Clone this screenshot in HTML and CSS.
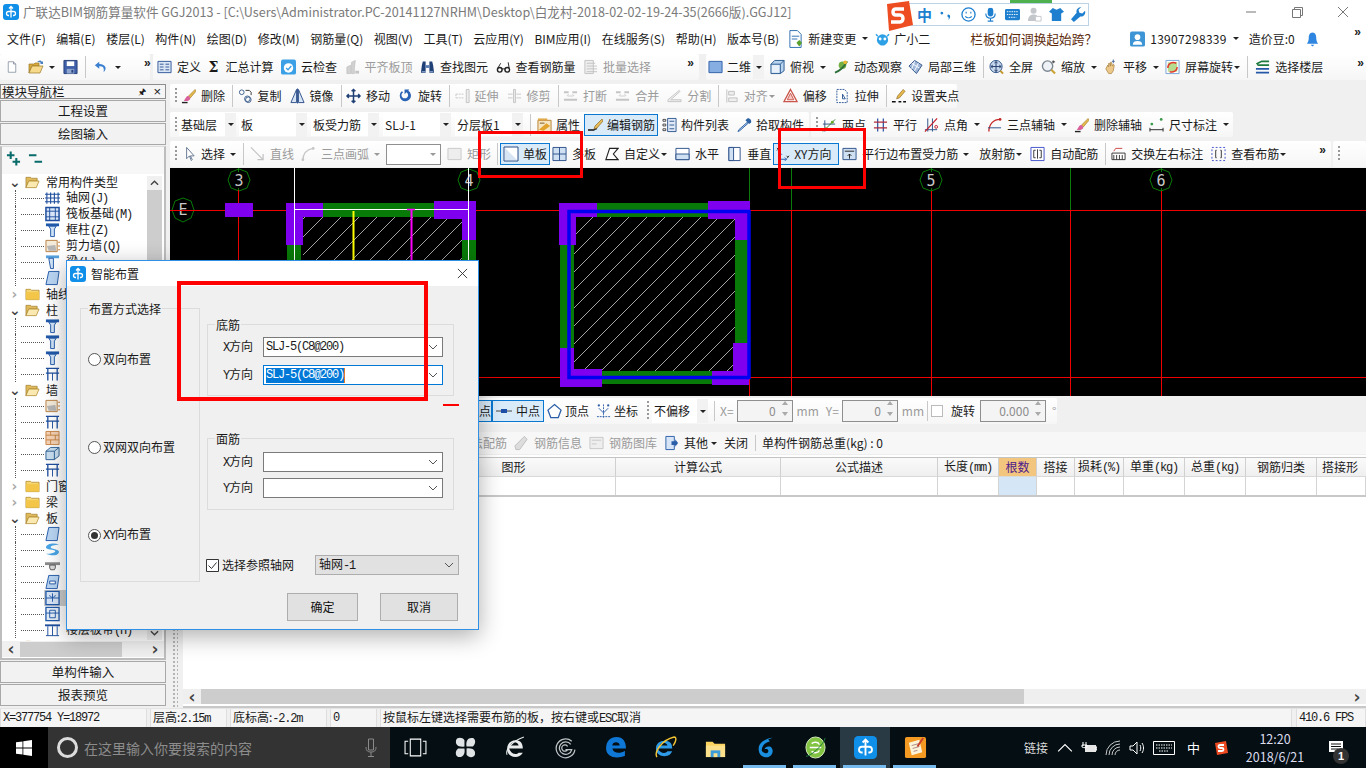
FILE: index.html
```html
<!DOCTYPE html>
<html lang="zh-CN">
<head>
<meta charset="utf-8">
<title>广联达BIM钢筋算量软件 GGJ2013</title>
<link rel="stylesheet" href="styles.css">
</head>
<body>
<svg class="sprite" xmlns="http://www.w3.org/2000/svg">
<symbol id="new" viewBox="0 0 16 16"><path d="M3 1h7l3 3v11H3z" fill="#fff" stroke="#7b8794"/><path d="M10 1v3h3" fill="#dde" stroke="#7b8794"/></symbol>
<symbol id="open" viewBox="0 0 16 16"><path d="M1 14V5h5l1-1h4v3H4L1 14z" fill="#d9a93c" stroke="#9a7a2a" stroke-width=".7"/><path d="M1 14l3-7h11l-3 7z" fill="#f6d98a" stroke="#9a7a2a" stroke-width=".7"/><path d="M9 3c2-2 4-2 5 0l1-1v3h-3l1-1c-1-1-2-1-4-1z" fill="#4a7fc1"/></symbol>
<symbol id="save" viewBox="0 0 16 16"><path d="M1 1h14v14H1z" fill="#3f5fa8" stroke="#26407a"/><path d="M4 2h8v5H4z" fill="#fff"/><path d="M4 10h8v5H4z" fill="#8fa6cf"/><path d="M9 11h2v3H9z" fill="#26407a"/></symbol>
<symbol id="undo" viewBox="0 0 16 16"><path d="M6 2L1 6l5 4V7c4 0 6 1 5 7 4-4 3-9-5-9.500z" fill="#3b7fd0"/></symbol>
<symbol id="def" viewBox="0 0 16 16"><path d="M1 2h14v12H1z" fill="#dbe6f5" stroke="#2f5597"/><path d="M3 5h4M3 8h4M3 11h4M9 5h4M9 8h4M9 11h4" stroke="#2f5597"/></symbol>
<symbol id="cloud" viewBox="0 0 16 16"><rect x="0" y="0" width="16" height="16" rx="2" fill="#3ba0e6"/><circle cx="8" cy="9" r="5" fill="#fff"/><path d="M5.500 9l2 2 3.500-4" fill="none" stroke="#3ba0e6" stroke-width="1.500"/></symbol>
<symbol id="level" viewBox="0 0 16 16"><path d="M2 15V8l4-2v9zM7 15V3l4-2-1 8v6z" fill="#d2d2d2" stroke="#b5b5b5" stroke-width=".6"/><path d="M11 12h4v3h-4z" fill="#c4c4c4"/></symbol>
<symbol id="bino" viewBox="0 0 16 16"><path d="M1 14l1-8 1-4h3v12zM10 2h3l1 4 1 8H10z" fill="#1f3f77"/><path d="M6 6h4v3H6z" fill="#5b7cb3"/><path d="M2 13h4M10 13h4" stroke="#9db4d9"/></symbol>
<symbol id="glass" viewBox="0 0 16 16"><circle cx="4" cy="11" r="2.500" fill="none" stroke="#222" stroke-width="1.500"/><circle cx="12" cy="11" r="2.500" fill="none" stroke="#222" stroke-width="1.500"/><path d="M6 10h4M2 9l3-5M14 9l-1-6" fill="none" stroke="#222"/></symbol>
<symbol id="batch" viewBox="0 0 16 16"><path d="M2 1h9v14H2z" fill="#eee" stroke="#c2c2c2"/><path d="M4 4h9M4 7h11M4 10h11M4 13h11" stroke="#c2c2c2"/></symbol>
<symbol id="plan" viewBox="0 0 16 16"><path d="M1 2h14v12H1z" fill="#86aee3" stroke="#2f5fa8"/></symbol>
<symbol id="top" viewBox="0 0 16 16"><path d="M1 5l4-4h10v11l-4 3H1z" fill="#b9d4ee" stroke="#26578f"/><path d="M1 5h10v10M11 5l4-4" fill="none" stroke="#26578f"/><path d="M2 6h8v8H2z" fill="#e8f1fa"/></symbol>
<symbol id="orbit" viewBox="0 0 16 16"><circle cx="9" cy="6" r="4" fill="#72b043"/><path d="M1 14c4-1 10-6 13-12" fill="none" stroke="#2f6f3b" stroke-width="2"/><circle cx="12" cy="3" r="2" fill="#e7b92f"/></symbol>
<symbol id="local" viewBox="0 0 16 16"><path d="M1 7l6-6 8 5-6 9z" fill="#9fb8da" stroke="#33558a"/><path d="M4 4l8 5M7 2l-3 8M11 4l-4 8" stroke="#fff"/></symbol>
<symbol id="full" viewBox="0 0 16 16"><circle cx="7.500" cy="7.500" r="6.500" fill="#c8d9ef" stroke="#2c4f86"/><path d="M7.500 2.500v10M2.500 7.500h10M6 4l1.500-2L9 4M6 11l1.500 2L9 11M4 6L2 7.500 4 9M11 6l2 1.500L11 9" fill="none" stroke="#203a66"/><path d="M12 12l3 3" stroke="#c09a2c" stroke-width="2"/></symbol>
<symbol id="zoomi" viewBox="0 0 16 16"><circle cx="7" cy="7" r="5.500" fill="#eef2f6" stroke="#7c8792" stroke-width="1.500"/><path d="M11 11l4 4" stroke="#caa335" stroke-width="2.200"/><path d="M13 1v3M12 2.500h3" stroke="#333"/></symbol>
<symbol id="hand" viewBox="0 0 16 16"><path d="M3 10l2-4 1 2V4l1 0 1 3V3l1 0 1 4 1-2 1 1-1 6-2 3H6z" fill="#ecc88a" stroke="#a47a36" stroke-width=".7"/><path d="M11 0v4M9.500 2h3" stroke="#4c6f9f"/></symbol>
<symbol id="rot" viewBox="0 0 16 16"><path d="M1 1h14v14H1z" fill="#fff" stroke="#76a3d6"/><path d="M3 3h10v10H3z" fill="#b7dc8f"/><path d="M3 9c0-5 5-7 9-5" fill="none" stroke="#e23a2a" stroke-width="1.600"/><path d="M13 8c0 4-4 6-8 5" fill="none" stroke="#e23a2a" stroke-width="1.600"/></symbol>
<symbol id="floor" viewBox="0 0 16 16"><path d="M1 4l6-3h8v2H7L3 5h12v2H3z" fill="#1f7a3d"/><path d="M1 9h14v2H1zM1 13h14v2H1z" fill="#2458a6"/></symbol>
<symbol id="brush" viewBox="0 0 16 16"><path d="M15 1L8 8l2 2 6-7z" fill="#e4b84c" stroke="#9a7628" stroke-width=".6"/><path d="M8 8c-3 0-3 3-5 5 3 1 7 0 7-3z" fill="#d9609a"/><path d="M1 15h6" stroke="#222" stroke-width="1.500"/></symbol>
<symbol id="copy" viewBox="0 0 16 16"><circle cx="4" cy="4" r="2.500" fill="none" stroke="#3d5f8e"/><circle cx="10" cy="11" r="3" fill="none" stroke="#3d5f8e"/><circle cx="11" cy="12" r="3" fill="none" stroke="#3d5f8e"/><path d="M8 2h4l2 2v3" fill="none" stroke="#333"/></symbol>
<symbol id="mirror" viewBox="0 0 16 16"><path d="M7 1L1 15h6zM9 1l6 14H9z" fill="#d7e5f6" stroke="#2d4f8a"/><path d="M8 0v16" stroke="#2d4f8a"/></symbol>
<symbol id="move" viewBox="0 0 16 16"><path d="M8 1v14M1 8h14M6 3l2-2 2 2M6 13l2 2 2-2M3 6L1 8l2 2M13 6l2 2-2 2" fill="none" stroke="#1e3f74" stroke-width="1.600"/></symbol>
<symbol id="rotate" viewBox="0 0 16 16"><path d="M4 3a6 6 0 1 0 7-.500L12 1 7 1v5l2-2a3.500 3.500 0 1 1-3.500 0z" fill="#2a63b5"/></symbol>
<symbol id="extend" viewBox="0 0 16 16"><path d="M1 6h9M1 10h9M1 6v4" fill="none" stroke="#c8c8c8" stroke-dasharray="2 1"/><path d="M12 1h3v14h-3z" fill="#eee" stroke="#c3c3c3"/></symbol>
<symbol id="trim" viewBox="0 0 16 16"><path d="M1 6h5M10 6h5M1 10h5M10 10h5" stroke="#c8c8c8"/><path d="M7 1h2v14H7z" fill="#eee" stroke="#c3c3c3"/></symbol>
<symbol id="break" viewBox="0 0 16 16"><path d="M1 4h5M10 4h5M1 12h14" stroke="#c5c5c5" stroke-width="2"/><path d="M5 8h6M4 8l2-2M12 8l-2-2" fill="none" stroke="#ccc"/></symbol>
<symbol id="split" viewBox="0 0 16 16"><path d="M1 14h14v-2H4L14 3l-1-1L1 12z" fill="#eee" stroke="#c5c5c5"/></symbol>
<symbol id="align" viewBox="0 0 16 16"><path d="M3 1v14M5 3h6v4H5zM5 10h9v4H5z" fill="#eee" stroke="#c0c0c0"/></symbol>
<symbol id="offset" viewBox="0 0 16 16"><path d="M8 1l7 13H1z" fill="#fff" stroke="#c9554b" stroke-width="1.400"/><path d="M8 5l3.500 7h-7z" fill="#f4c6c0" stroke="#c9554b"/></symbol>
<symbol id="stretch" viewBox="0 0 16 16"><path d="M2 1h8l3 3v11H2z" fill="#fff" stroke="#2e5896" stroke-dasharray="2 1"/><path d="M8 6l3 5H8z" fill="none" stroke="#2e5896"/></symbol>
<symbol id="gripi" viewBox="0 0 16 16"><path d="M1 14h4M8 14h3M13 14h3" stroke="#111" stroke-width="1.600"/><path d="M13 1L7 8l-1 3 3-1 6-7z" fill="#e7b84a" stroke="#8a6a26" stroke-width=".7"/></symbol>
<symbol id="attr" viewBox="0 0 16 16"><path d="M1 3h14v12H1z" fill="#f7e6c4" stroke="#b57f2d"/><path d="M1 1h10v2H1z" fill="#e0a94a"/><path d="M2 13l8-7 4 3-7 5z" fill="#e2a32d"/><path d="M3 6h5" stroke="#7c5520"/></symbol>
<symbol id="edit" viewBox="0 0 16 16"><path d="M1 13h6c1 0 1-2 3-1" fill="none" stroke="#111" stroke-width="1.300"/><path d="M15 2L8 9l-1 3 3-1 6-7z" fill="#e6bd5a" stroke="#8d6a28" stroke-width=".7"/></symbol>
<symbol id="list" viewBox="0 0 16 16"><path d="M6 1h9v14H6z" fill="#dfe9f7" stroke="#30588f"/><path d="M8 4h5M8 8h5M8 12h5" stroke="#30588f"/><path d="M1 2h3v2H1zM1 7h3v2H1zM1 12h3v2H1z" fill="none" stroke="#222" stroke-width=".8"/></symbol>
<symbol id="drop" viewBox="0 0 16 16"><path d="M11 5L2 13l-1 2 2-1 9-8z" fill="#b7d3ef" stroke="#2d62a3"/><path d="M9 3l4 4 1-1 1-1c1-2-2-5-4-4z" fill="#2d62a3"/></symbol>
<symbol id="two" viewBox="0 0 16 16"><path d="M1 13h13M3 15V3M1 7h13" stroke="#2f4f7f"/><path d="M1 15L14 2" stroke="#2e7d32"/><circle cx="4" cy="12" r="1.500" fill="#9a3"/><circle cx="11" cy="5" r="1.500" fill="#6a2"/></symbol>
<symbol id="par" viewBox="0 0 16 16"><path d="M5 1v14M11 1v14" stroke="#2b4fa0" stroke-width="1.300"/><path d="M1 5h14M1 11h14" stroke="#b02a3a" stroke-width="1.300"/></symbol>
<symbol id="ang" viewBox="0 0 16 16"><path d="M1 13h13M4 1v14M9 1v14" stroke="#2b4f8a"/><path d="M1 15L14 1" stroke="#c21f2a" stroke-width="1.300"/><circle cx="13" cy="10" r="1.500" fill="none" stroke="#c21f2a"/></symbol>
<symbol id="arc3" viewBox="0 0 16 16"><path d="M2 15C2 7 7 2 14 2" fill="none" stroke="#c62828" stroke-width="1.400"/><path d="M1 11h14" stroke="#2b4f8a"/><circle cx="14" cy="2" r="1.400" fill="#c62828"/></symbol>
<symbol id="dim" viewBox="0 0 16 16"><path d="M1 11v4M15 11v4M1 13h14" stroke="#222"/><circle cx="3" cy="7" r="1.500" fill="#3c9a4c"/><circle cx="13" cy="2" r="1.500" fill="#3c9a4c"/></symbol>
<symbol id="sel" viewBox="0 0 16 16"><path d="M6 1v12l3-3 2 5 1-1-2-4h4z" fill="#fff" stroke="#60738f"/></symbol>
<symbol id="line" viewBox="0 0 16 16"><path d="M1 1l13 13M14 8v6H8" fill="none" stroke="#c2c2c2" stroke-width="1.300"/></symbol>
<symbol id="arc" viewBox="0 0 16 16"><path d="M2 15C2 7 7 3 13 2" fill="none" stroke="#c6c6c6" stroke-width="1.400"/><circle cx="2" cy="14" r="1.500" fill="#c6c6c6"/><circle cx="13" cy="2" r="1.500" fill="#c6c6c6"/></symbol>
<symbol id="rect" viewBox="0 0 16 16"><path d="M1 2h14v12H1z" fill="#eee" stroke="#c9c9c9"/></symbol>
<symbol id="one" viewBox="0 0 16 16"><path d="M1 1h14v14H1z" fill="#fff" stroke="#2b4f8a"/><path d="M2 2v12h12z" fill="#d7e4f4"/></symbol>
<symbol id="multi" viewBox="0 0 16 16"><path d="M1 1h14v14H1zM8 1v14M1 8h14" fill="#cfe0f2" stroke="#2b4f8a"/></symbol>
<symbol id="cust" viewBox="0 0 16 16"><path d="M6 2h9l-5 6 5 6H2z" fill="#fff" stroke="#222" stroke-width="1.200"/></symbol>
<symbol id="hor" viewBox="0 0 16 16"><path d="M1 2h14v12H1z" fill="#fff" stroke="#2b4f8a"/><path d="M1 8h14v6H1z" fill="#cfe0f2" stroke="#2b4f8a"/></symbol>
<symbol id="ver" viewBox="0 0 16 16"><path d="M2 1h12v14H2z" fill="#fff" stroke="#2b4f8a"/><path d="M2 1h5v14H2z" fill="#cfe0f2" stroke="#2b4f8a"/></symbol>
<symbol id="xy" viewBox="0 0 16 16"><path d="M5 7v7h7" fill="none" stroke="#2a60b0" stroke-width="1.200"/><path d="M3 9l2-2 2 2M10 12l2 2-2 2" fill="none" stroke="#2a60b0"/><path d="M1 1l3 3M4 1L1 4M12 10l1.500 1.500M15 10l-2.500 3" stroke="#222"/></symbol>
<symbol id="pare" viewBox="0 0 16 16"><path d="M1 2h14v12H1z" fill="#cfe0f2" stroke="#2b4f8a"/><path d="M3 5h10M8 13V8M6 10l2-2 2 2" fill="none" stroke="#222"/></symbol>
<symbol id="auto" viewBox="0 0 16 16"><path d="M1 1h14v14H1z" fill="#fff" stroke="#3f50c8"/><path d="M6 4H4v8h2M10 4h2v8h-2M8 3v10" fill="none" stroke="#333"/></symbol>
<symbol id="swap" viewBox="0 0 16 16"><path d="M1 7h14v7H1z" fill="#fff" stroke="#333"/><path d="M3 9v5M6 9v5M9 9v5M12 9v5" stroke="#333"/><path d="M3 5l2-3h7" fill="none" stroke="#c44"/></symbol>
<symbol id="viewr" viewBox="0 0 16 16"><path d="M1 1h14v14H1z" fill="none" stroke="#3f50c8" stroke-dasharray="2 2"/><path d="M6 4H5v8h1M10 4h1v8h-1" fill="none" stroke="#333"/></symbol>
<symbol id="mid" viewBox="0 0 16 16"><path d="M0 8h16" stroke="#444"/><path d="M5 6h6v4H5z" fill="#1d4fa8"/></symbol>
<symbol id="vtx" viewBox="0 0 16 16"><path d="M8 1l7 6-3 8H4L1 7z" fill="#fff" stroke="#2b5ea8" stroke-width="1.300"/></symbol>
<symbol id="crd" viewBox="0 0 16 16"><path d="M1 14h14M8 1v14" stroke="#2b5ea8" stroke-dasharray="2 1"/><path d="M3 5l5 5 5-5" fill="none" stroke="#2b5ea8"/><circle cx="3" cy="2" r="1.200" fill="#2b5ea8"/><circle cx="13" cy="2" r="1.200" fill="#2b5ea8"/></symbol>
<symbol id="info" viewBox="0 0 16 16"><path d="M11 1l3 3-8 11H2l-1-4z" fill="#ddd" stroke="#bdbdbd"/></symbol>
<symbol id="lib" viewBox="0 0 16 16"><path d="M1 2h14v12H1z" fill="#eee" stroke="#c6c6c6"/><path d="M3 5h10M3 9h5" stroke="#c6c6c6"/></symbol>
<symbol id="other" viewBox="0 0 16 16"><path d="M2 1h9v14H2z" fill="#d7e5f6" stroke="#2b5ea8"/><path d="M8 6h4V4l3 4-3 4v-2H8z" fill="#2b5ea8"/></symbol>
<symbol id="doc" viewBox="0 0 16 20"><path d="M2 1h8l4 4v14H2z" fill="#fff" stroke="#2b6cb0"/><path d="M4 7h8M4 10h6" stroke="#2b6cb0"/><path d="M9 14l3-3 3 3-3 4z" fill="#5aa02c"/></symbol>
<symbol id="bot" viewBox="0 0 16 16"><path d="M2 9a6 6 0 0 1 12 0c0 3-3 6-6 6s-6-3-6-6z" fill="#2ea0e6"/><circle cx="5.500" cy="8" r="1.500" fill="#fff"/><circle cx="10.500" cy="8" r="1.500" fill="#fff"/><path d="M3 5L1 3M13 5l2-2" stroke="#2ea0e6" stroke-width="1.500"/></symbol>
<symbol id="user" viewBox="0 0 16 16"><rect width="16" height="16" rx="2" fill="#3d95d6"/><circle cx="8" cy="6" r="3" fill="#fff"/><path d="M3 14c0-3 2-4 5-4s5 1 5 4z" fill="#fff"/></symbol>
<symbol id="bell" viewBox="0 0 16 16"><path d="M8 1c3 0 4 3 4 6s1 5 2 6H2c1-1 2-3 2-6s1-6 4-6z" fill="#2f86e0"/><path d="M6 14h4l-2 2z" fill="#2f86e0"/></symbol>
<symbol id="folder" viewBox="0 0 16 16"><path d="M1 3h5l1 1h8v10H1z" fill="#f5d472" stroke="#b0892e" stroke-width=".8"/><path d="M1 6h14v8H1z" fill="#f3c64a"/></symbol>
<symbol id="folderopen" viewBox="0 0 16 16"><path d="M1 3h5l1 1h6v3H4l-3 7z" fill="#e0b95b" stroke="#9a7a2a" stroke-width=".7"/><path d="M1 14l3-7h11l-3 7z" fill="#fbe9b2" stroke="#b0892e" stroke-width=".8"/></symbol>
<symbol id="tgrid" viewBox="0 0 16 16"><path d="M2 2v12M6 2v12M10 2v12M14 2v12M0 4h16M0 8h16M0 12h16" stroke="#1f4f9e" stroke-width="1.200"/></symbol>
<symbol id="traft" viewBox="0 0 16 16"><path d="M1 1h14v14H1z" fill="#d7e5f6" stroke="#1f4f9e" stroke-width="1.600"/><path d="M5 1v14M11 1v14M1 5h14M1 11h14" stroke="#1f4f9e"/></symbol>
<symbol id="tcol" viewBox="0 0 16 16"><path d="M1 1h14v3H1z" fill="#2159a9"/><path d="M4 4h8l-2 3v8H6V7z" fill="#cfe2f6" stroke="#2159a9"/></symbol>
<symbol id="twall" viewBox="0 0 16 16"><path d="M1 2h12v12H1z" fill="#f3ead9" stroke="#b77e3f"/><path d="M2 8l2 5h8l-1-6z" fill="#b5b5b5"/><path d="M14 4h2M14 8h2M14 12h2" stroke="#c67b2c"/></symbol>
<symbol id="tbeam" viewBox="0 0 16 16"><path d="M1 1h14v3H1z" fill="#55a0dc"/><path d="M4 4l5 0v11H6z" fill="#cfe2f6" stroke="#2159a9"/></symbol>
<symbol id="tslab" viewBox="0 0 16 16"><path d="M4 1h11l-2 14H1z" fill="#b9d6f4" stroke="#2159a9"/></symbol>
<symbol id="tbrick" viewBox="0 0 16 16"><path d="M1 1h14v14H1z" fill="#f5d3b5" stroke="#c98343"/><path d="M1 5h14M1 10h14M6 1v4M11 5v5M6 10v5" stroke="#c98343"/></symbol>
<symbol id="tbox" viewBox="0 0 16 16"><path d="M1 5l5-4h9v9l-5 4H1z" fill="#c8deef" stroke="#2c5f94"/><path d="M1 5h9v9M10 5l5-4" fill="none" stroke="#2c5f94"/></symbol>
<symbol id="tsect" viewBox="0 0 16 16"><path d="M1 2h14M3 2v13M13 2v13M1 7h14" fill="none" stroke="#1f4f9e" stroke-width="1.400"/><path d="M8 7v8" stroke="#1f4f9e"/></symbol>
<symbol id="ts" viewBox="0 0 16 16"><path d="M15 2C9 0 2 1 1 5c0 3 9 2 10 4 0 2-5 3-10 3 4 2 13 3 14-2 0-3-9-3-9-5s4-2 9-3z" fill="#4aa7e8"/></symbol>
<symbol id="tcap" viewBox="0 0 16 16"><path d="M0 4h16v3H0z" fill="#8b8b8b"/><path d="M5 7h6v3l-1 2H6l-1-2z" fill="#ddd" stroke="#555"/></symbol>
<symbol id="tcut" viewBox="0 0 16 16"><path d="M4 1h11l-2 14H1z" fill="#b9d6f4" stroke="#2159a9"/><path d="M5 7h6v3H5z" fill="#fff" stroke="#2159a9"/></symbol>
<symbol id="tglue" viewBox="0 0 16 16"><path d="M1 1h14v14H1z" fill="#d7e5f6" stroke="#2159a9" stroke-width="1.400"/><path d="M1 8h14M8 3v9M5 5c0 3 6 3 6 0" fill="none" stroke="#2159a9"/></symbol>
<symbol id="tband" viewBox="0 0 16 16"><path d="M1 1h14v14H1z" fill="#e4eef9" stroke="#2159a9" stroke-width="1.400"/><path d="M1 7h14M5 4h6v8H5z" fill="none" stroke="#2159a9"/></symbol>
<symbol id="tflr" viewBox="0 0 16 16"><path d="M0 2h16v2H0z" fill="#1f4f9e"/><path d="M3 4v10M8 4v10M13 4v10M1 14h14" stroke="#1f4f9e"/></symbol>
<symbol id="app" viewBox="0 0 16 16"><rect width="16" height="16" rx="3" fill="#0f8fe8"/><path d="M8 2.500v11M6 4.500l2-2 2 2M8 7.500H5.500a2 2 0 0 0 0 4H6M8 7.500h2.500a2 2 0 0 1 0 4H10" fill="none" stroke="#fff" stroke-width="1.300"/></symbol>
<symbol id="chev" viewBox="0 0 10 6"><path d="M1 1l4 4 4-4" fill="none" stroke="#555"/></symbol>
</svg>

<div class="titlebar">
  <svg class="i tapp"><use href="#app"/></svg>
  <span class="title">广联达BIM钢筋算量软件 GGJ2013 - [C:\Users\Administrator.PC-20141127NRHM\Desktop\白龙村-2018-02-02-19-24-35(2666版).GGJ12]</span>
  <span class="winctl">
    <svg viewBox="0 0 46 20"><path d="M18 10h10" stroke="#777"/></svg>
    <svg viewBox="0 0 46 20"><path d="M18.500 7.500h8v8h-8zM20.500 7.500v-2h8v8h-2" fill="none" stroke="#777"/></svg>
    <svg viewBox="0 0 46 20"><path d="M18 5l10 10M28 5L18 15" stroke="#777"/></svg>
  </span>
</div>

<div class="menubar">
  <span class="mi">文件(F)</span><span class="mi">编辑(E)</span><span class="mi">楼层(L)</span><span class="mi">构件(N)</span><span class="mi">绘图(D)</span><span class="mi">修改(M)</span><span class="mi">钢筋量(Q)</span><span class="mi">视图(V)</span><span class="mi">工具(T)</span><span class="mi">云应用(Y)</span><span class="mi">BIM应用(I)</span><span class="mi">在线服务(S)</span><span class="mi">帮助(H)</span><span class="mi">版本号(B)</span>
  <span class="it mnew"><svg class="i tall"><use href="#doc"/></svg>新建变更<i class="dd"></i></span>
  <span class="it mbot"><svg class="i"><use href="#bot"/></svg>广小二</span>
  <span class="news">栏板如何调换起始跨？</span>
  <span class="acct">
    <span class="it"><svg class="i"><use href="#user"/></svg><span class="ph">13907298339</span><i class="dd"></i></span>
    <span class="beans">造价豆:0</span>
    <svg class="i"><use href="#bell"/></svg>
    <span class="more mright">»</span>
  </span>
</div>

<div class="row r1">
  <div class="band b11">
    <svg class="i w12"><use href="#new"/></svg>
    <svg class="i opn"><use href="#open"/></svg><i class="dd ddopen"></i>
    <svg class="i sv"><use href="#save"/></svg><i class="sep sep1"></i>
    <svg class="i w14"><use href="#undo"/></svg><i class="dd ddund"></i>
    <span class="more m1">»</span>
  </div>
  <div class="band b12">
    <span class="it"><svg class="i"><use href="#def"/></svg>定义</span>
    <span class="it"><span class="sig">Σ</span>汇总计算</span>
    <span class="it"><svg class="i"><use href="#cloud"/></svg>云检查</span>
    <span class="it off"><svg class="i"><use href="#level"/></svg>平齐板顶</span>
    <span class="it"><svg class="i"><use href="#bino"/></svg>查找图元</span>
    <span class="it"><svg class="i"><use href="#glass"/></svg>查看钢筋量</span>
    <span class="it off"><svg class="i"><use href="#batch"/></svg>批量选择</span>
    <span class="more mright">»</span>
  </div>
  <div class="band b13">
    <span class="it wh"><svg class="i"><use href="#plan"/></svg>二维</span><span class="ddbox"><i class="dd"></i></span>
    <span class="it"><svg class="i"><use href="#top"/></svg>俯视<i class="dd"></i></span>
    <span class="it tight"><svg class="i"><use href="#orbit"/></svg>动态观察</span>
    <span class="it"><svg class="i"><use href="#local"/></svg>局部三维</span>
    <i class="sep"></i>
    <span class="it"><svg class="i"><use href="#full"/></svg>全屏</span>
    <span class="it tight"><svg class="i"><use href="#zoomi"/></svg>缩放<i class="dd"></i></span>
    <span class="it tight"><svg class="i"><use href="#hand"/></svg>平移<i class="dd"></i></span>
    <span class="it"><svg class="i"><use href="#rot"/></svg>屏幕旋转<i class="dd dc"></i></span>
    <i class="sep"></i>
    <span class="it flrs"><svg class="i"><use href="#floor"/></svg>选择楼层</span>
    <span class="more mright">»</span>
  </div>
</div>

<div class="main">
  <aside class="nav">
    <div class="navhead"><span>模块导航栏</span><span class="pin">🖈</span><span class="navx">×</span></div>
    <div class="navbtn">工程设置</div>
    <div class="navbtn">绘图输入</div>
    <div class="treebox">
      <div class="treetools"><svg class="i" viewBox="0 0 16 16"><path d="M1 4h8M5 0v8M7 11h8M11 7v8" stroke="#0a6b6b" stroke-width="2.200"/></svg><svg class="i" viewBox="0 0 16 16"><path d="M1 4h8M7 11h8" stroke="#0a6b6b" stroke-width="2.200"/></svg></div>
      <div class="tree">
        <div class="t0"><span class="ex">⌄</span><svg class="i"><use href="#folderopen"/></svg><span>常用构件类型</span></div>
        <div class="t1"><b></b><svg class="i"><use href="#tgrid"/></svg><span>轴网<span class="m">(J)</span></span></div>
        <div class="t1"><b></b><svg class="i"><use href="#traft"/></svg><span>筏板基础<span class="m">(M)</span></span></div>
        <div class="t1"><b></b><svg class="i"><use href="#tcol"/></svg><span>框柱<span class="m">(Z)</span></span></div>
        <div class="t1"><b></b><svg class="i"><use href="#twall"/></svg><span>剪力墙<span class="m">(Q)</span></span></div>
        <div class="t1"><b></b><svg class="i"><use href="#tbeam"/></svg><span>梁<span class="m">(L)</span></span></div>
        <div class="t1"><b></b><svg class="i"><use href="#tslab"/></svg><span>现浇板<span class="m">(B)</span></span></div>
        <div class="t0"><span class="ex cl">›</span><svg class="i"><use href="#folder"/></svg><span>轴线</span></div>
        <div class="t0"><span class="ex">⌄</span><svg class="i"><use href="#folderopen"/></svg><span>柱</span></div>
        <div class="t1"><b></b><svg class="i"><use href="#tcol"/></svg><span>框柱</span></div>
        <div class="t1"><b></b><svg class="i"><use href="#tcol"/></svg><span>暗柱</span></div>
        <div class="t1"><b></b><svg class="i"><use href="#tcol"/></svg><span>端柱</span></div>
        <div class="t1"><b></b><svg class="i"><use href="#tsect"/></svg><span>构造柱</span></div>
        <div class="t0"><span class="ex">⌄</span><svg class="i"><use href="#folderopen"/></svg><span>墙</span></div>
        <div class="t1"><b></b><svg class="i"><use href="#twall"/></svg><span>剪力墙</span></div>
        <div class="t1"><b></b><svg class="i"><use href="#tsect"/></svg><span>人防门框墙</span></div>
        <div class="t1"><b></b><svg class="i"><use href="#tbrick"/></svg><span>砌体墙</span></div>
        <div class="t1"><b></b><svg class="i"><use href="#tbox"/></svg><span>暗梁</span></div>
        <div class="t1"><b></b><svg class="i"><use href="#tsect"/></svg><span>砌体加筋</span></div>
        <div class="t0"><span class="ex cl">›</span><svg class="i"><use href="#folder"/></svg><span>门窗洞</span></div>
        <div class="t0"><span class="ex cl">›</span><svg class="i"><use href="#folder"/></svg><span>梁</span></div>
        <div class="t0"><span class="ex">⌄</span><svg class="i"><use href="#folderopen"/></svg><span>板</span></div>
        <div class="t1"><b></b><svg class="i"><use href="#tslab"/></svg><span>现浇板</span></div>
        <div class="t1"><b></b><svg class="i"><use href="#ts"/></svg><span>螺旋板</span></div>
        <div class="t1"><b></b><svg class="i"><use href="#tcap"/></svg><span>柱帽</span></div>
        <div class="t1"><b></b><svg class="i"><use href="#tcut"/></svg><span>板洞</span></div>
        <div class="t1 hi"><b></b><svg class="i"><use href="#tglue"/></svg><span>板受力筋</span></div>
        <div class="t1"><b></b><svg class="i"><use href="#tband"/></svg><span>板负筋</span></div>
        <div class="t1"><b></b><svg class="i"><use href="#tflr"/></svg><span>楼层板带<span class="m">(H)</span></span></div>
        <div class="t0"><span class="ex"></span><svg class="i"><use href="#folder"/></svg></div>
      </div>
      <div class="vs"><span class="vup"><svg viewBox="0 0 10 6"><path d="M1 5l4-4 4 4" fill="none" stroke="#444" stroke-width="1.500"/></svg></span><span class="vthumb"></span><span class="vdn"><svg viewBox="0 0 10 6"><path d="M1 1l4 4 4-4" fill="none" stroke="#444" stroke-width="1.500"/></svg></span></div>
      <div class="hs"><span class="harrow">‹</span><span class="hthumb"></span><span class="harrow">›</span></div>
    </div>
    <div class="navbtn">单构件输入</div>
    <div class="navbtn">报表预览</div>
  </aside>

  <div class="work">
    <div class="row r2">
      <div class="band b2">
        <i class="grip"></i>
        <span class="it"><svg class="i"><use href="#brush"/></svg>删除</span><i class="sep"></i>
        <span class="it"><svg class="i"><use href="#copy"/></svg>复制</span>
        <span class="it"><svg class="i"><use href="#mirror"/></svg>镜像</span><i class="sep"></i>
        <span class="it"><svg class="i"><use href="#move"/></svg>移动</span>
        <span class="it"><svg class="i"><use href="#rotate"/></svg>旋转</span><i class="sep"></i>
        <span class="it off"><svg class="i"><use href="#extend"/></svg>延伸</span>
        <span class="it off"><svg class="i"><use href="#trim"/></svg>修剪</span><i class="sep"></i>
        <span class="it off"><svg class="i"><use href="#break"/></svg>打断</span>
        <span class="it off"><svg class="i"><use href="#break"/></svg>合并</span>
        <span class="it off"><svg class="i"><use href="#split"/></svg>分割</span><i class="sep"></i>
        <span class="it off"><svg class="i"><use href="#align"/></svg>对齐<i class="dd dc"></i></span>
        <span class="it"><svg class="i"><use href="#offset"/></svg>偏移</span>
        <span class="it"><svg class="i"><use href="#stretch"/></svg>拉伸</span><i class="sep"></i>
        <span class="it"><svg class="i"><use href="#gripi"/></svg>设置夹点</span>
      </div>
    </div>
    <div class="row r3">
      <div class="band b31">
        <i class="grip"></i>
        <span class="cb s"><span>基础层</span><span class="ddbox"><i class="dd"></i></span></span>
        <span class="cb"><span>板</span><span class="ddbox"><i class="dd"></i></span></span>
        <span class="cb"><span>板受力筋</span><span class="ddbox"><i class="dd"></i></span></span>
        <span class="cb"><span>SLJ-1</span><span class="ddbox"><i class="dd"></i></span></span>
        <span class="cb"><span>分层板1</span><span class="ddbox"><i class="dd"></i></span></span>
        <i class="sep sep3"></i>
        <span class="it attr"><svg class="i"><use href="#attr"/></svg>属性</span>
        <span class="it btn"><svg class="i"><use href="#edit"/></svg>编辑钢筋</span>
        <span class="it"><svg class="i"><use href="#list"/></svg>构件列表</span>
        <span class="it"><svg class="i"><use href="#drop"/></svg>拾取构件</span>
      </div>
      <div class="band b32">
        <i class="grip"></i>
        <span class="it"><svg class="i"><use href="#two"/></svg>两点</span>
        <span class="it"><svg class="i"><use href="#par"/></svg>平行</span>
        <span class="it"><svg class="i"><use href="#ang"/></svg>点角<i class="dd"></i></span>
        <span class="it"><svg class="i"><use href="#arc3"/></svg>三点辅轴<i class="dd"></i></span>
        <span class="it"><svg class="i"><use href="#brush"/></svg>删除辅轴</span>
        <span class="it"><svg class="i"><use href="#dim"/></svg>尺寸标注<i class="dd"></i></span>
      </div>
    </div>
    <div class="row r4">
      <div class="band b41">
        <i class="grip"></i>
        <span class="it"><svg class="i"><use href="#sel"/></svg>选择<i class="dd"></i></span><i class="sep sep4"></i>
        <span class="it off lnk"><svg class="i"><use href="#line"/></svg>直线</span>
        <span class="it off"><svg class="i"><use href="#arc"/></svg>三点画弧<i class="dd"></i></span>
        <span class="cbx"><i class="dd off2"></i></span>
        <span class="it off"><svg class="i"><use href="#rect"/></svg>矩形</span><i class="sep seph"></i>
        <span class="it btn nb"><svg class="i"><use href="#one"/></svg>单板</span>
        <span class="it"><svg class="i"><use href="#multi"/></svg>多板</span>
        <span class="it"><svg class="i"><use href="#cust"/></svg>自定义<i class="dd dc"></i></span>
        <span class="it"><svg class="i"><use href="#hor"/></svg>水平</span>
        <span class="it nb"><svg class="i"><use href="#ver"/></svg>垂直</span>
        <span class="it btn nb xyb"><svg class="i"><use href="#xy"/></svg>XY方向</span>
        <span class="it pe"><svg class="i"><use href="#pare"/></svg>平行边布置受力筋<i class="dd"></i></span>
        <span class="it">放射筋<i class="dd dc"></i></span>
        <span class="it"><svg class="i"><use href="#auto"/></svg>自动配筋</span><i class="sep"></i>
        <span class="it"><svg class="i"><use href="#swap"/></svg>交换左右标注</span>
        <span class="it"><svg class="i"><use href="#viewr"/></svg>查看布筋<i class="dd dc"></i></span>
        <span class="more mright">»</span>
      </div>
      <div class="band b42"><i class="grip"></i></div>
    </div>

    <svg class="canvas" viewBox="170 168 1196 228" xmlns="http://www.w3.org/2000/svg">
      <defs><pattern id="hatch" width="18" height="18" patternUnits="userSpaceOnUse"><path d="M-2 20L20 -2" stroke="#b5b5b5" stroke-width=".9"/></pattern></defs>
      <rect x="170" y="168" width="1196" height="228" fill="#000"/>
      <g stroke="#0a7a0a" fill="none">
        <path d="M238.500 168v42M468.500 168v42M749.500 168v42M791.500 168v42M931.500 168v42M1070.500 168v42M1161.500 168v42"/>
        <polygon points="239,169 247,172 250,180 247,188 239,191 231,188 228,180 231,172"/>
        <polygon points="469,169 477,172 480,180 477,188 469,191 461,188 458,180 461,172"/>
        <polygon points="931,169 939,172 942,180 939,188 931,191 923,188 920,180 923,172"/>
        <polygon points="1161,169 1169,172 1172,180 1169,188 1161,191 1153,188 1150,180 1153,172"/>
        <polygon points="183,198 191,201 194,210 191,218 183,222 175,218 172,210 175,201"/>
      </g>
      <g fill="#c8c8c8" font-family="DejaVu Sans Mono" font-size="15" text-anchor="middle">
        <rect x="232" y="172" width="14" height="16" fill="#000"/>
        <rect x="462" y="172" width="14" height="16" fill="#000"/>
        <rect x="924" y="172" width="14" height="16" fill="#000"/>
        <rect x="1154" y="172" width="14" height="16" fill="#000"/>
        <text x="239" y="186">3</text><text x="469" y="186">4</text><text x="931" y="186">5</text><text x="1161" y="186">6</text><text x="183" y="215">E</text>
      </g>
      <path d="M170 210.500h1196M478 377.500h888" stroke="#e00" stroke-width="1"/>
      <path d="M238.500 190v75M749.500 210v186M791.500 210v186M931.500 191v205M1070.500 210v186M1161.500 191v205" stroke="#e00"/>
      <rect x="225" y="203" width="28" height="14" fill="#7f00ee"/>
      <g>
        <rect x="303" y="217" width="159" height="60" fill="url(#hatch)"/>
        <path d="M323 203h111v14H323zM287 245h14v20h-14zM462 240h14v25h-14z" fill="#087a08"/>
        <path d="M286 203h37v14h-20v28h-17zM434 201h42v39h-14v-21h-28z" fill="#7f00ee"/>
        <path d="M294.500 168v97M294 209.500h175M468.500 168v41M468.500 209v56" stroke="#fff" fill="none"/>
        <path d="M353.500 211v54" stroke="#ff0" stroke-width="2"/><path d="M411.500 209v56" stroke="#f0f" stroke-width="2"/><path d="M407 209.500h8" stroke="#f0f" stroke-width="1.500"/>
      </g>
      <g>
        <rect x="574" y="217" width="161" height="154" fill="url(#hatch)"/>
        <path d="M597 203h111v14H597zM560 245h14v103h-14zM735 240h14v103h-14zM602 371h110v13H602z" fill="#087a08"/>
        <path d="M559 203h38v14h-21v28h-17zM708 201h42v39h-15v-21h-27zM560 348h14v21h28v18h-42zM733 343h16v42h-37v-14h21z" fill="#7f00ee"/>
        <rect x="569" y="211.500" width="180" height="166" fill="none" stroke="#0000f0" stroke-width="3.500"/>
      </g>
    </svg>

    <div class="row r5">
      <div class="band b5">
        <span class="it btn nb ptb">点</span>
        <span class="it btn mdb"><svg class="i"><use href="#mid"/></svg>中点</span>
        <span class="it vt"><svg class="i"><use href="#vtx"/></svg>顶点</span>
        <span class="it"><svg class="i"><use href="#crd"/></svg>坐标</span>
        <i class="grip gl"></i>
        <span class="cb o"><span>不偏移</span><span class="ddbox"><i class="dd"></i></span></span>
        <i class="sep sep5"></i>
        <span class="off lbl">X=</span><span class="num"><span>0</span><i class="spin"></i></span><span class="off lbl">mm</span><span class="off lbl y">Y=</span><span class="num"><span>0</span><i class="spin"></i></span><span class="off lbl">mm</span>
        <i class="sep sep6"></i><i class="chk"></i>
        <span class="rlabel">旋转</span><span class="num wide"><span>0.000</span><i class="spin"></i></span><span class="off deg">°</span>
      </div>
    </div>

    <div class="lower">
      <div class="split"></div>
      <div class="panel">
        <div class="ptools">
          <span class="it off"><svg class="i"><use href="#info"/></svg>梁平法配筋</span>
          <span class="it off"><svg class="i"><use href="#info"/></svg>钢筋信息</span>
          <span class="it off"><svg class="i"><use href="#lib"/></svg>钢筋图库</span>
          <span class="it"><svg class="i"><use href="#other"/></svg>其他<i class="dd dc"></i></span>
          <span class="it">关闭</span>
          <i class="sep"></i>
          <span class="it">单构件钢筋总重(kg) : 0</span>
        </div>
        <div class="grid">
          <div class="h"></div><div class="h">图形</div><div class="h">计算公式</div><div class="h">公式描述</div><div class="h"><span>长度<span class="m">(mm)</span></span></div><div class="h hl">根数</div><div class="h">搭接</div><div class="h"><span>损耗<span class="m">(%)</span></span></div><div class="h"><span>单重<span class="m">(kg)</span></span></div><div class="h"><span>总重<span class="m">(kg)</span></span></div><div class="h">钢筋归类</div><div class="h clip">搭接形</div>
          <div class="c"></div><div class="c"></div><div class="c"></div><div class="c"></div><div class="c"></div><div class="c cs"></div><div class="c"></div><div class="c"></div><div class="c"></div><div class="c"></div><div class="c"></div><div class="c"></div>
        </div>
        <div class="pbody"></div>
        <div class="phs"><span class="harrow">‹</span><span class="hthumb"></span><span class="harrow">›</span></div>
      </div>
    </div>
  </div>
</div>

<div class="status">
  <span class="st s1 mono">X=377754 Y=18972</span>
  <span class="st s2"><span>层高:<span class="m">2.15m</span></span></span>
  <span class="st s3"><span>底标高:<span class="m">-2.2m</span></span></span>
  <span class="st s4 mono">0</span>
  <span class="st s5"><span>按鼠标左键选择需要布筋的板，按右键或<span class="m">ESC</span>取消</span></span>
  <span class="st s6 mono">410.6 FPS</span>
</div>

<div class="taskbar">
  <span class="start"><svg viewBox="0 0 16 16"><path d="M0 2.300l6.500-.9v6.200H0zM7.300 1.300L16 0v7.600H7.300zM0 8.400h6.500v6.200L0 13.700zM7.300 8.400H16V16l-8.700-1.300z" fill="#fff"/></svg></span>
  <span class="search"><i class="ring"></i><span>在这里输入你要搜索的内容</span><svg class="micro" viewBox="0 0 12 20"><path d="M3.500 1h5v11h-5zM1 9c0 4 2 5 5 5s5-1 5-5M6 14v4M3 18.500h6" fill="none" stroke="#8a8a8a"/></svg></span>
  <span class="slot"><svg viewBox="0 0 22 20"><path d="M6 2h10v16H6zM4 4H1v12h3M18 4h3v12h-3" fill="none" stroke="#fff"/></svg></span>
  <span class="slot"><svg viewBox="0 0 22 22"><path d="M10 10C4 11 1 8 2 4c1-3 6-3 8 0zM12 10C11 4 14 1 18 2c3 1 3 6 0 8zM12 12c6-1 9 2 8 6-1 3-6 3-8 0zM10 12c1 6-2 9-6 8-3-1-3-6 0-8z" fill="#dfe3e6"/></svg></span>
  <span class="slot"><svg viewBox="0 0 22 22"><path d="M5 12h13c0-6-3-8-7-8S3 7 3 12s3 8 8 8c3 0 5-1 7-4h-4c-2 2-7 2-9-4zM6 9c1-4 7-4 8 0z" fill="#e8eaec" fill-rule="evenodd"/><path d="M3 18C1 14 7 5 19 1" fill="none" stroke="#e8eaec"/></svg></span>
  <span class="slot"><svg viewBox="0 0 22 22"><path d="M17 5A9 9 0 1 0 20 13M16 8a6 6 0 1 0 1 5h-6M13 10a3 3 0 1 0 0 3" fill="none" stroke="#bfc3c6" stroke-width="1.200"/></svg></span>
  <span class="slot"><svg viewBox="0 0 22 22"><path d="M2 12C2 5 6 1 12 1c6 0 9 4 9 11H8c1 5 8 5 12 2v5c-7 3-18 2-18-7zM8 9h7c0-4-7-4-7 0z" fill="#0f78d6" fill-rule="evenodd"/></svg></span>
  <span class="slot"><svg viewBox="0 0 24 24"><path d="M4 13h15c0-6-3-8-8-8S2 8 2 13s4 8 9 8c4 0 6-1 8-5h-5c-2 3-8 2-10-3zM6 10c1-4 7-4 8 0z" fill="#2f9ae6" fill-rule="evenodd"/><path d="M3 22C0 17 8 4 21 1c3 0 2 5-1 9" fill="none" stroke="#f3c433" stroke-width="1.500"/></svg></span>
  <span class="slot"><svg viewBox="0 0 24 22"><path d="M2 5h7l2 2h11v14H2z" fill="#fbd45f"/><path d="M2 9h20v12H2z" fill="#fde08a"/><path d="M7 14h10v7H7z" fill="#3e9bd9"/><path d="M10 17h4v4h-4z" fill="#fde08a"/></svg></span>
  <span class="slot u"><svg viewBox="0 0 24 26"><path d="M20 2c-3 0-8 2-11 4C5 9 3 13 5 19c2 5 9 7 13 3 3-3 3-8-1-10-3-1-6 1-6 3 2-1 5 0 4 3-1 2-5 2-7-1-1-4 2-9 9-11l-2-2z" fill="#1a8fe0"/></svg></span>
  <span class="slot u"><svg viewBox="0 0 24 24"><ellipse cx="12" cy="12" rx="10" ry="11" fill="#82c341" stroke="#d7ecc0"/><path d="M6 12h12M8 8c2-2 7-2 8 1M8 16c2 2 7 2 8-1" fill="none" stroke="#fff" stroke-width="1.600"/><path d="M2 21C5 23 22 8 22 2" fill="none" stroke="#1f7a3d"/></svg></span>
  <span class="slot u act"><svg class="lg"><use href="#app"/></svg></span>
  <span class="slot u"><svg viewBox="0 0 24 24"><rect x="1" y="1" width="22" height="22" rx="2" fill="#f49a22"/><path d="M5 7l11-3 3 13-11 3z" fill="#fdf3d8"/><path d="M8 10l7-2M9 13l7-2M10 16l4-1" stroke="#a88"/><path d="M20 2l-6 9" stroke="#c6402a" stroke-width="2"/></svg></span>
  <span class="tray">
    <span class="tt">链接</span>
    <svg class="ti" viewBox="0 0 14 14"><path d="M1 10l6-6 6 6" fill="none" stroke="#fff"/></svg>
    <svg class="ti" viewBox="0 0 16 14"><path d="M4 4h11v7H4z" fill="#e6e6e6"/><path d="M15 6h1v3h-1zM2 1v4M5 1v3M1 4h5v2c0 1-3 1-5 0z" stroke="#fff" fill="none"/></svg>
    <svg class="ti" viewBox="0 0 16 16"><path d="M1 15A14 14 0 0 1 15 1M4 15A11 11 0 0 1 15 4M7 15a8 8 0 0 1 8-8M10 15a5 5 0 0 1 5-5" fill="none" stroke="#c9c9c9"/></svg>
    <svg class="ti" viewBox="0 0 16 16"><path d="M1 6h3l4-4v12l-4-4H1zM11 5c1 2 1 4 0 6M13 3c2 3 2 7 0 10" fill="none" stroke="#fff"/></svg>
    <svg class="kb" viewBox="0 0 22 14"><path d="M.5.500h21v13H.500z" fill="none" stroke="#fff"/><path d="M3 4h16M3 7h16M6 10h10" stroke="#fff" stroke-dasharray="1.500 1"/></svg>
    <span class="tz">中</span>
    <svg class="ti sg" viewBox="0 0 16 16"><path d="M2 3l11-2 2 12-11 2z" fill="#ee4a22"/><path d="M11 5H7c-2 0-2 3 0 3h2c2 0 2 3 0 3H5" fill="none" stroke="#fff" stroke-width="1.800"/></svg>
    <span class="clock"><span>12:20</span><span>2018/6/21</span></span>
    <span class="notif"><svg viewBox="0 0 16 16"><path d="M1 1h14v11H1z" fill="#fff"/><path d="M3 4h10M3 6.500h10M3 9h7" stroke="#111"/></svg><b>1</b></span>
  </span>
</div>

<div class="ime">
  <svg class="imes" viewBox="0 0 30 30"><path d="M4 3l22-3 4 24-24 6z" fill="#ee4d21"/><path d="M21 8h-8c-4 0-4 6 0 6h4c4 0 4 7 0 7H8" fill="none" stroke="#fff" stroke-width="3.400"/></svg>
  <span class="imez">中</span>
  <svg viewBox="0 0 16 16"><path d="M3 5a1.500 1.500 0 1 0 .1 0zM10 8c2 0 3 3 0 6 1-3 0-3-1-4 0-1 0-2 1-2z" fill="#1e7fcf"/></svg>
  <svg viewBox="0 0 16 16"><circle cx="8" cy="8" r="7" fill="#fff" stroke="#1e7fcf" stroke-width="1.400"/><path d="M5.500 5v2M10.500 5v2M4.500 10c2 2 5 2 7 0" fill="none" stroke="#1e7fcf" stroke-width="1.200"/></svg>
  <svg viewBox="0 0 16 16"><path d="M6 1h4v8H6z" fill="#1e7fcf"/><rect x="5" y="1" width="6" height="9" rx="3" fill="#1e7fcf"/><path d="M3 7c0 4 2 5 5 5s5-1 5-5M8 12v3M5 15h6" fill="none" stroke="#1e7fcf" stroke-width="1.200"/></svg>
  <svg viewBox="0 0 16 16"><rect y="2" width="16" height="12" rx="1.500" fill="#1e7fcf"/><path d="M2 5h12M2 8h12M4 11h8" stroke="#fff" stroke-dasharray="1.500 1"/></svg>
  <svg viewBox="0 0 16 16"><circle cx="7" cy="4" r="3.200" fill="#c3c7cc"/><path d="M1 15c0-5 3-7 6-7s6 2 6 7z" fill="#c3c7cc"/><path d="M9 10h6v5H9z" fill="#fff" stroke="#c3c7cc"/></svg>
  <svg viewBox="0 0 16 16"><path d="M4 1l4 2 4-2 4 4-3 2v8H3V7L0 5z" fill="#1e7fcf"/></svg>
  <svg viewBox="0 0 16 16"><path d="M15 4l-3 3-3-1-1-3 3-3C8 0 5 3 6 6L0 13l3 3 7-6c3 1 6-2 5-6z" fill="#1e7fcf"/></svg>
</div>
<i class="imetop"></i>

<div class="dialog">
  <div class="dhead">
    <svg class="i"><use href="#app"/></svg><span>智能布置</span>
    <svg class="dclose" viewBox="0 0 12 12"><path d="M1 1l10 10M11 1L1 11" stroke="#333"/></svg>
  </div>
  <div class="dbody">
    <div class="gl-left">
      <span class="lg-t">布置方式选择</span>
      <label class="radio"><i></i><span>双向布置</span></label>
      <label class="radio"><i></i><span>双网双向布置</span></label>
      <label class="radio on"><i></i><span><span class="m">XY</span>向布置</span></label>
    </div>
    <div class="dright">
      <div class="gbox">
        <span class="lg-t">底筋</span>
        <div class="frow"><span class="fl"><span class="m">X</span>方向</span><span class="fc"><span class="m">SLJ-5(C8@200)</span><svg class="cv"><use href="#chev"/></svg></span></div>
        <div class="frow"><span class="fl"><span class="m">Y</span>方向</span><span class="fc foc"><span class="m seltext">SLJ-5(C8@200)</span><svg class="cv"><use href="#chev"/></svg></span></div>
      </div>
      <div class="gbox g2">
        <span class="lg-t">面筋</span>
        <div class="frow"><span class="fl"><span class="m">X</span>方向</span><span class="fc end"><svg class="cv"><use href="#chev"/></svg></span></div>
        <div class="frow"><span class="fl"><span class="m">Y</span>方向</span><span class="fc end"><svg class="cv"><use href="#chev"/></svg></span></div>
      </div>
      <div class="refrow">
        <label class="check"><svg viewBox="0 0 13 13"><path d="M.5.500h12v12H.500z" fill="#fff" stroke="#333"/><path d="M2.500 6.500l3 3 5-6" fill="none" stroke="#333"/></svg><span>选择参照轴网</span></label>
        <span class="fc sel"><span>轴网<span class="m">-1</span></span><svg class="cv"><use href="#chev"/></svg></span>
      </div>
    </div>
    <div class="dbtns"><button class="db b1">确定</button><button class="db b2x">取消</button></div>
  </div>
</div>

<i class="red rb1"></i><i class="red rb2"></i><i class="red rb3"></i><i class="red rb4"></i>
</body>
</html>
```
FILE: styles.css
```css
*{box-sizing:border-box}
html,body{margin:0;padding:0}
body{width:1366px;height:768px;overflow:hidden;position:relative;background:#f0f0f0;font:12px/16px "Noto Sans CJK SC","Liberation Sans",sans-serif;color:#1a1a1a;display:flex;flex-direction:column}
.sprite{position:absolute;width:0;height:0}
.i{width:15px;height:16px;flex:none}
.m,.mono{font-family:"Liberation Mono",monospace;font-size:12px;letter-spacing:-1.2px}
.w12{width:12px;height:16px}.w14{width:14px;height:16px}
.titlebar{height:23px;background:#fff;display:flex;align-items:center;flex:none}
.tapp{margin:0 4px 0 3px;width:16px}
.title{color:#7a7a7a;font-size:12.600px;white-space:nowrap}
.winctl{margin-left:auto;display:flex}
.winctl svg{width:46px;height:20px}
.menubar{height:31px;background:#fff;display:flex;align-items:center;flex:none;padding-left:7px;white-space:nowrap}
.mi{margin-right:10.600px}
.it{display:inline-flex;align-items:center;gap:5px;margin-right:8px;white-space:nowrap;height:22px}
.mnew{gap:5px;margin-left:-1.500px}.tall{height:20px}
.mbot{gap:4px;margin-left:-1px}
.news{color:#5e2c0d;margin-left:32px;width:157px;font-size:12.700px}
.acct{display:flex;align-items:center;flex:1;height:31px;padding-left:3px}
.acct .it{margin-right:6px}
.ph{letter-spacing:.3px}
.beans{margin:0 10px 0 4px}
.more{font:700 12px/12px "Liberation Sans",sans-serif;color:#222;align-self:flex-start;margin-top:3px}
.mright{margin-left:auto;margin-right:5px}
.dd{display:inline-block;width:0;height:0;border-left:3px solid transparent;border-right:3px solid transparent;border-top:3px solid #222;margin-left:1px;flex:none}
.dc{margin-left:-4px}
.off{color:#9b9b9b}
.off .dd,.off2{border-top-color:#999}
.sep{width:1px;height:22px;background:#c8c8c8;margin:0 5px 0 -1px;flex:none}
.grip{width:2px;height:16px;margin:0 4px 0 5px;flex:none;background:repeating-linear-gradient(#999 0 2px,transparent 2px 4px)}
.row{display:flex;flex:none}
.band{background:linear-gradient(#fff,#f6f6f6);display:flex;align-items:center;border-radius:2px;flex:none}
.r1{height:30px;padding-bottom:4px}
.b11{width:150px;padding-left:6px}
.opn{width:16px;margin-left:10px}
.ddopen{margin-left:5px}.sv{margin:0 0 0 8px}.sep1{margin:0 8px 0 7px}
.ddund{margin-left:7px}
.m1{margin-left:23px}
.b12{width:546px;margin-left:3px;padding-left:4px}
.b12 .it{margin-right:7.500px}
.sig{font:700 14px/16px "DejaVu Serif",serif;width:12px;margin:0}
.b13{width:663px;margin-left:7px;padding-left:2px}
.wh{margin-right:2px;gap:4px}
.ddbox{display:inline-flex;align-items:center;justify-content:center;width:11px;height:24px;background:#f2f2f2;flex:none}
.ddbox .dd{margin:0}
.b13>.ddbox{margin-right:6px}
.tight{margin-right:6px}
.flrs{margin-left:2px}
.main{flex:1;display:flex;min-height:0}
.nav{width:166px;margin-right:4px;flex:none;display:flex;flex-direction:column;gap:1px;padding-bottom:2px}
.navhead{height:15px;border:1px solid #8e8e8e;display:flex;align-items:center;font-size:12.500px;background:#f5f5f5;padding-left:1px;flex:none}
.pin{margin-left:auto;font-size:9px;font-family:"DejaVu Sans",sans-serif;margin-right:7px}
.navx{margin-right:4px;font-size:13px;font-family:"Liberation Sans",sans-serif}
.navbtn{height:22px;border:1px solid #a8a8a8;display:flex;align-items:center;justify-content:center;background:#f2f2f2;font-size:12.500px;flex:none}
.treebox{flex:1;min-height:0;position:relative;background:#fff;border:2px solid #bdbdbd;border-top:1px solid #ddd;display:flex;flex-direction:column;overflow:hidden}
.treetools{height:28px;display:flex;align-items:center;padding:0 0 2px 4px;gap:7px;background:#f7f7f7;flex:none;margin-top:-1px}
.tree{flex:1;overflow:hidden}
.t0,.t1{height:16px;display:flex;align-items:center;white-space:nowrap}
.t0{padding-left:7px}
.t0 .i{margin-right:6px;margin-left:5px;width:15px}
.ex{width:11px;text-align:center;font:700 14px/12px "DejaVu Sans",sans-serif;color:#444}
.cl{color:#aaa}
.t1{padding-left:13px;position:relative}
.t1 b{width:29px;height:16px;border-left:1px dotted #555;position:relative;flex:none}
.t1 b::after{content:"";position:absolute;left:5px;right:0;top:8px;border-top:1px dotted #555}
.t1 .i{margin:0 6px 0 1px;width:15px}
.hi{background:linear-gradient(90deg,#fff 42px,#ccc 42px)}
.vs{position:absolute;right:2px;top:29px;bottom:18px;width:15px;background:#f0f0f0;display:flex;flex-direction:column}
.vup,.vdn{height:14px;display:flex;align-items:center;justify-content:center}
.vup svg,.vdn svg{width:9px;height:6px}
.vthumb{height:120px;background:#cdcdcd}
.vdn{margin-top:auto}
.hs{height:16px;background:#f0f0f0;display:flex;align-items:center;flex:none;margin-bottom:1px}
.harrow{width:18px;text-align:center;font:700 17px/14px "DejaVu Sans",sans-serif;color:#444;flex:none}
.hthumb{background:#cdcdcd;height:15px;width:102px}
.hs .harrow:last-child{margin-left:auto}
.work{flex:1;min-width:0;display:flex;flex-direction:column}
.r2{height:27px;padding-bottom:3px}
.b2{width:787px}
.b2 .sep{margin-right:4.500px}
.r3{height:28px;padding:1px 0 2px}
.b31{width:639px}
.b31>.grip{margin-right:2px}
.b31 .it{gap:4px}
.cb{display:inline-flex;align-items:center;justify-content:space-between;width:68px;height:23px;background:#fff;padding-left:2px;margin-right:4px;flex:none}
.cb.s{width:57px;margin-right:3px}
.sep3{margin:0 6px 0 3px}
.attr{margin-right:4px}
.btn{height:22px;background:#d9ebf9;border:1px solid #0a78d0;padding:0 2px;gap:4px;margin-right:4px}
.btn .i{width:16px}
.b32{width:422px;margin-left:2px}
.b32 .it{margin-right:7px}
.r4{height:29px;padding:2px 0 1px}
.b41{width:1161px}
.b41 .dd:not(.dc){margin-left:0}
.b42{width:33px;margin-left:2px}
.sep4{margin:0 6px 0 -1px}
.lnk{margin-right:7px}
.cbx{width:55px;height:21px;background:#fff;border:1px solid #8f8f8f;margin:0 6px 0 -2px;display:flex;align-items:center;justify-content:flex-end;padding-right:4px;flex:none}
.seph{margin:0 2px 0 -2px}
.nb{margin-right:2px}
.xyb{width:66px;gap:4px;margin-right:3px}
.xyb .i{width:14px}
.pe{margin-right:10px}
.canvas{display:block;width:1196px;height:228px;flex:none}
.r5{height:36px;padding-top:2px;padding-bottom:8px}
.b5{width:887px;padding-left:308px}
.b5 .it{gap:3px;margin-right:4px}
.ptb{width:14px;padding:0;border-left:0;justify-content:flex-end}
.b5 .ptb{margin-right:0}
.mdb{width:52px;padding:0 3px;justify-content:space-between}
.b5 .mdb{margin-right:3px}
.b5 .vt{margin-right:7px}
.gl{margin:0 3px 0 5px;height:20px}
.cb.o{width:56px;margin-right:6px}
.sep5{margin:0 5px 0 0;height:20px}
.lbl{margin-right:3px}
.lbl.y{margin-left:4px}
.num{width:56px;height:22px;border:1px solid #8f8f8f;background:#f4f4f4;display:flex;align-items:center;justify-content:flex-end;padding-right:16px;color:#8c8c8c;position:relative;margin-right:4px;flex:none}
.num.wide{width:66px}
.spin{position:absolute;right:4px;top:4px;height:12px;width:6px;border-left:3px solid transparent;border-right:3px solid transparent;border-top:4px solid #aaa;transform:translateY(7px)}
.spin::before{content:"";position:absolute;left:-3px;top:-15px;border-left:3px solid transparent;border-right:3px solid transparent;border-bottom:4px solid #aaa}
.sep6{margin:0 3px 0 0;height:20px}
.chk{width:12px;height:12px;border:1px solid #bbb;background:#fff;flex:none}
.rlabel{margin:0 5px 0 8px}
.deg{margin-left:2px}
.lower{flex:1;display:flex;min-height:0}
.split{width:13px;background:radial-gradient(circle,#b4b4b4 1px,transparent 1.100px) 2px 0/4px 4px,#f0f0f0;flex:none;background-clip:content-box;padding:0 5px 0 2px}
.panel{flex:1;min-width:0;display:flex;flex-direction:column;background:#fff;border-bottom:2px solid #c8c8c8}
.ptools{height:23px;background:#f7f7f7;display:flex;align-items:center;padding-left:244px;flex:none;margin-bottom:2px;border-bottom:1px solid #eee}
.ptools .it{margin-right:7px}
.ptools .dc{margin-left:-2px}
.ptools .sep{height:16px;margin:0 6px 0 0}
.grid{display:grid;grid-template-columns:229px 204px 165px 157px 61px 38px 38px 49px 61px 61px 71px 49px;flex:none;border-top:1px solid #c3c3c3;border-bottom:2px solid #c8c8c8}
.h{height:19px;background:linear-gradient(#fafafa,#efefef);border-right:1px solid #d0d0d0;border-bottom:1px solid #d9d9d9;display:flex;align-items:center;justify-content:center;white-space:nowrap;overflow:hidden}
.hl{background:#f3c680;color:#4d1a8b}
.clip{justify-content:flex-start;padding-left:5px;border-right:0}
.c{height:18px;border-right:1px solid #d4d4d4;background:#fff}
.cs{background:#d5e7f6}
.pbody{flex:1;background:#fff}
.phs{height:15px;background:#efefef;display:flex;align-items:center;flex:none;margin-bottom:2px}
.phs .hthumb{width:823px}
.phs .harrow:last-child{margin-left:auto}
.status{height:19px;flex:none;display:flex;gap:3px;background:#f0f0f0;border-top:1px solid #e4e4e4}
.st{height:19px;display:flex;align-items:center;border:1px solid #dedede;border-top:0;padding-left:2px;background:#f5f5f5;white-space:nowrap;font-size:12px}
.s1{width:147px}.s2{width:77px}.s3{width:97px}.s4{width:47px}.s5{width:912px}.s6{flex:1;margin-left:1px}
.taskbar{height:41px;flex:none;background:#040e13;display:flex;color:#fff;overflow:hidden}
.start{width:48px;background:#000;display:flex;align-items:center;justify-content:center;flex:none}
.start svg{width:16px;height:18px}
.search{width:342px;background:#333;display:flex;align-items:center;padding-left:9px;color:#8c8c8c;font-size:14px;flex:none}
.ring{width:21px;height:21px;border-radius:50%;border:3px solid #dcdcdc;margin-right:6px;flex:none}
.micro{width:12px;height:20px;margin-left:113px}
.slot{width:50px;flex:none;display:flex;align-items:center;justify-content:center;position:relative}
.slot svg{width:23px;height:23px}
.slot .lg{width:23px;height:25px}
.u::after{content:"";position:absolute;left:3px;right:4px;bottom:0;height:3px;background:#76b9ed}
.act{background:#2a3a44}
.tray{display:flex;align-items:center;margin-left:auto;color:#ddd;position:relative;flex:none}
.tt{margin-right:9px}
.ti{width:16px;height:16px;margin-right:8px;flex:none}
.kb{width:22px;height:14px;margin:0 12px 0 0;flex:none}
.tz{font-size:13px;margin-right:13px;color:#fff}
.sg{margin-right:15px}
.clock{display:flex;flex-direction:column;align-items:center;width:62px;line-height:18px;font-size:12.500px;color:#dde}
.notif{width:60px;display:flex;justify-content:center;position:relative}
.notif svg{width:16px;height:16px}
.notif b{position:absolute;left:27px;top:8px;width:16px;height:16px;border-radius:50%;background:#333;color:#fff;font:700 11px/16px "Liberation Sans",sans-serif;text-align:center}
.ime{position:absolute;left:907px;top:3px;width:182px;height:23px;background:#fff;border:1px solid #bcd3e6;display:flex;align-items:center;gap:7px;padding-left:9px;z-index:3}
.ime svg{width:15px;height:15px;flex:none}
.ime .imes{position:absolute;left:-25px;top:-3px;width:30px;height:30px}
.imez{color:#1e7fcf;font-size:15px;font-weight:700;width:16px;margin-right:-1px}
.imetop{position:absolute;left:1010px;top:0;width:42px;height:3px;background:#4fb04f;z-index:2}
.dialog{position:absolute;left:66px;top:260px;width:413px;height:370px;background:#f0f0f0;border:1px solid #2f90e6;box-shadow:0 6px 22px rgba(0,0,0,.32);z-index:5;display:flex;flex-direction:column}
.dhead{height:25px;background:#fff;display:flex;align-items:center;padding-left:3px;gap:5px;flex:none}
.dhead .i{width:16px}
.dclose{width:11px;height:11px;margin-left:auto;margin-right:10px}
.dbody{flex:1;position:relative;display:grid;grid-template-columns:120px 247px;column-gap:7px;align-content:start;padding:22px 0 0 13px}
.gl-left{height:274px;border:1px solid #dcdcdc;position:relative;padding:42px 0 0 7px;display:flex;flex-direction:column;gap:72px}
.lg-t{position:absolute;top:-8px;left:7px;background:#f0f0f0;padding:0 1px;line-height:16px}
.radio{display:flex;align-items:center;height:16px;gap:2px;white-space:nowrap}
.radio i{width:13px;height:13px;border-radius:50%;border:1px solid #555;background:#fff;position:relative;flex:none}
.on i::after{content:"";position:absolute;left:2px;top:2px;width:7px;height:7px;border-radius:50%;background:#333}
.dright{display:flex;flex-direction:column;padding-top:16px}
.gbox{height:72px;border:1px solid #dcdcdc;position:relative;padding:12px 0 0 15px;display:flex;flex-direction:column;gap:8px}
.g2{margin-top:42px;padding-top:13px;gap:6px}
.frow{display:flex;align-items:center;height:20px}
.fl{width:40px;white-space:nowrap}
.fc{display:flex;align-items:center;justify-content:space-between;width:180px;height:20px;background:#fff;border:1px solid #7a7a7a;padding:0 3px 0 2px;flex:none}
.fc.end{justify-content:flex-end}
.fc.foc{border-color:#0078d7}
.seltext{background:#0078d7;color:#fff;line-height:15px;border-right:1px solid #e37b2a}
.cv{width:10px;height:6px;flex:none;margin-right:1px}
.refrow{display:flex;align-items:center;margin-top:45px;height:20px;margin-left:-1px}
.check{display:flex;align-items:center;gap:3px;width:109px;white-space:nowrap;flex:none}
.check svg{width:13px;height:13px;flex:none}
.fc.sel{width:144px;background:#e1e1e1;border-color:#adadad;padding-left:3px}
.dbtns{position:absolute;right:20px;top:307px;display:flex;gap:22px}
.db{height:28px;background:#e1e1e1;border:1px solid #adadad;font:12px/16px "Noto Sans CJK SC",sans-serif;color:#111;padding:0;width:71px}
.b2x{width:78px}
.red{position:absolute;z-index:9;border:3px solid #f00}
.rb1{left:478px;top:131px;width:105px;height:47px}
.rb2{left:778px;top:128px;width:88px;height:61px}
.rb3{left:177px;top:281px;width:251px;height:120px;border-width:4px}
.rb4{left:443px;top:404px;width:16px;height:2px;border:0;background:#f00}
```
